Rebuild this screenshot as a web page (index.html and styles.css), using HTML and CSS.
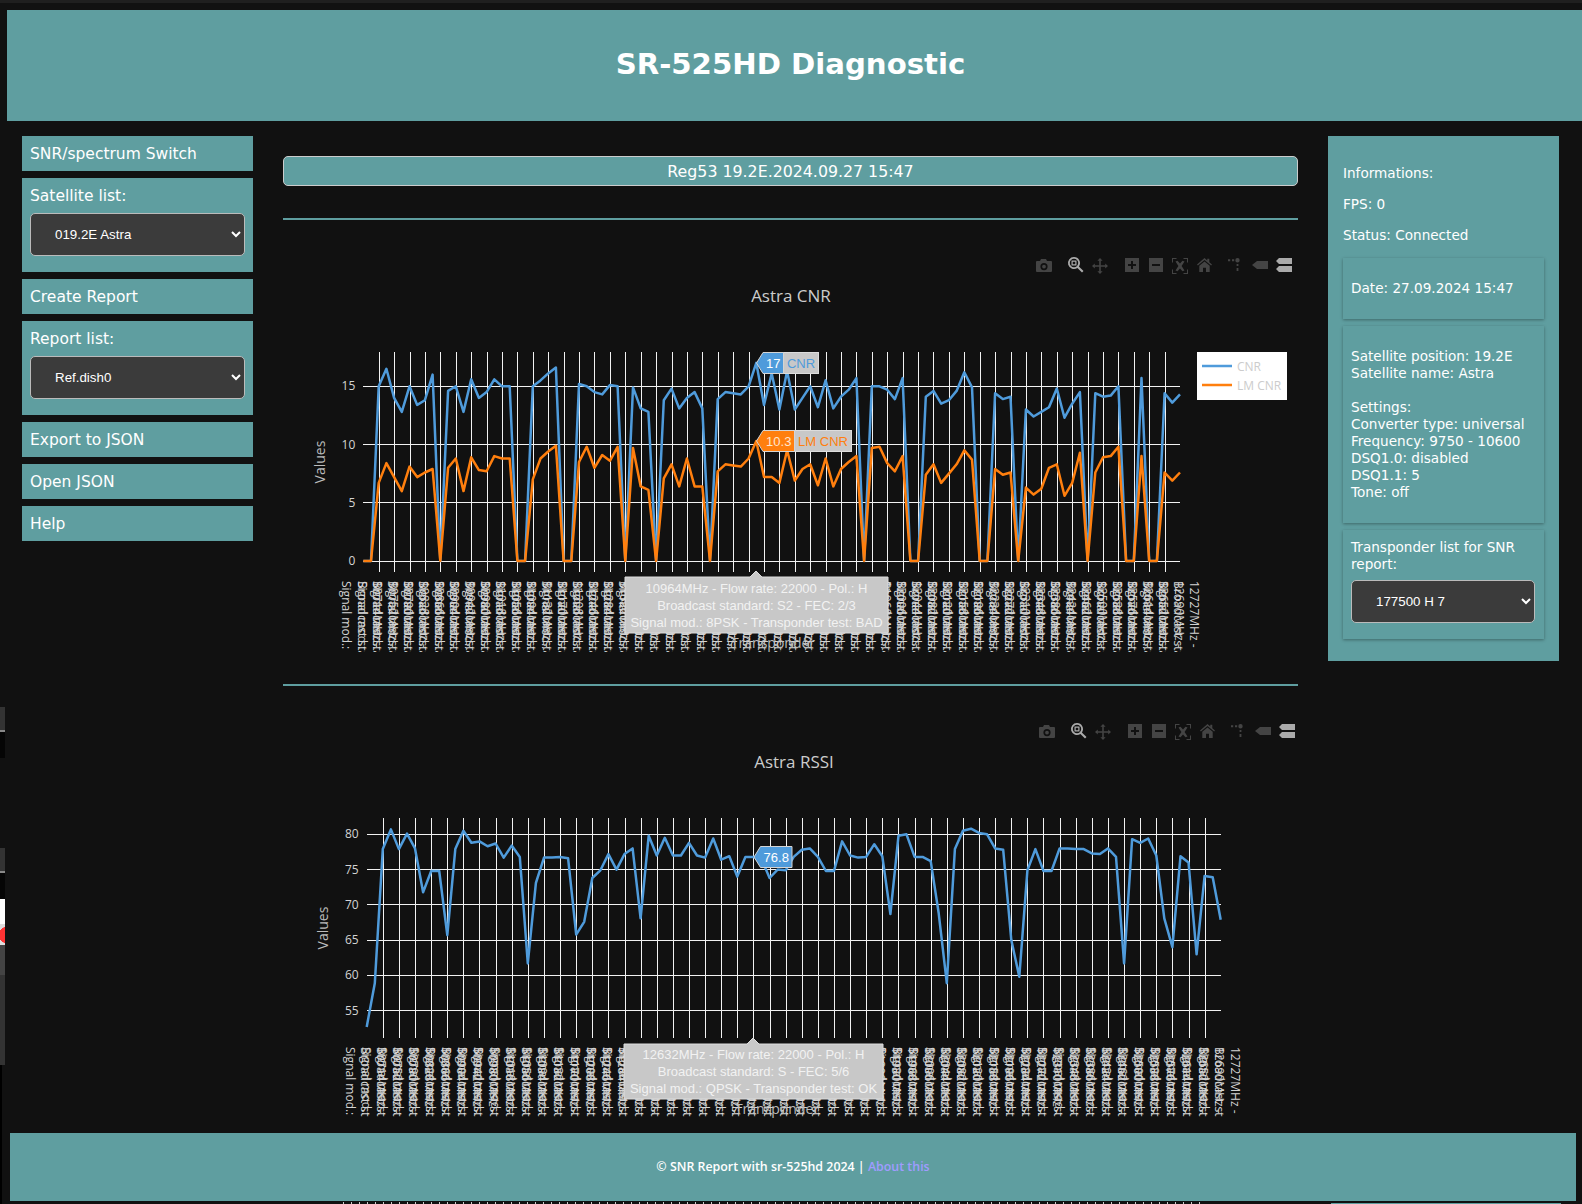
FILE: index.html
```html
<!DOCTYPE html>
<html lang="en">
<head>
<meta charset="utf-8">
<title>SR-525HD Diagnostic</title>
<link rel="stylesheet" href="styles.css">
</head>
<body>
<div class="edge edge-a"></div>
<div class="edge edge-b"></div>
<div class="edge edge-c"></div>
<div class="edge edge-d"></div>
<header class="site-header"><h1>SR-525HD Diagnostic</h1></header>
<div class="layout">
  <aside class="left-col">
    <div class="item">SNR/spectrum Switch</div>
    <div class="item list-item">
      <label>Satellite list:</label>
      <select><option>019.2E Astra</option></select>
    </div>
    <div class="item">Create Report</div>
    <div class="item list-item">
      <label>Report list:</label>
      <select><option>Ref.dish0</option></select>
    </div>
    <div class="item">Export to JSON</div>
    <div class="item">Open JSON</div>
    <div class="item">Help</div>
  </aside>
  <main class="main-col">
    <div class="banner">Reg53 19.2E.2024.09.27 15:47</div>
    <hr class="rule">
    <div class="chart" id="chart-cnr"></div>
    <hr class="rule">
    <div class="chart" id="chart-rssi"></div>
  </main>
  <aside class="right-col">
    <p>Informations:</p>
    <p>FPS: 0</p>
    <p>Status: Connected</p>
    <div class="card card-date">Date: 27.09.2024 15:47</div>
    <div class="card card-sat">Satellite position: 19.2E<br>Satellite name: Astra<br><br>Settings:<br>Converter type: universal<br>Frequency: 9750 - 10600<br>DSQ1.0: disabled<br>DSQ1.1: 5<br>Tone: off</div>
    <div class="card card-tp">
      <label>Transponder list for SNR report:</label>
      <select><option>177500 H 7</option></select>
    </div>
  </aside>
</div>
<footer class="site-footer"><span>© SNR Report with sr-525hd 2024 | <a href="#">About this</a></span></footer>
<div class="under-ticks"></div>
<div class="under-panel"></div>
<script src="charts.js"></script>
</body>
</html>
```
FILE: styles.css
```css
* { box-sizing: border-box; }
html, body { margin: 0; height: 100%; }
body {
  background: #111;
  border-top: 3px solid #1f1f1f;
  color: #fff;
  font-family: "DejaVu Sans", Verdana, sans-serif;
  overflow: hidden;
  position: relative;
}
.site-header {
  margin: 7px 0 0 7px;
  height: 111px;
  padding: 0 8px 3px 0;
  background: cadetblue;
  display: flex;
  align-items: center;
  justify-content: center;
}
.site-header h1 { margin: 0; font-size: 29.2px; font-weight: 700; }
.layout {
  display: flex;
  align-items: flex-start;
  padding: 15px 0 0 22px;
}
.left-col { width: 231px; display: flex; flex-direction: column; gap: 7px; }
.item {
  background: cadetblue;
  height: 35px;
  line-height: 36px;
  padding: 0 8px;
  font-size: 15.5px;
}
.list-item { height: 94px; }
.list-item label { display: block; height: 35px; }
select {
  appearance: auto;
  display: block;
  background: #3b3b3b;
  color: #fff;
  border: 1px solid #bbb;
  border-radius: 5px;
  font-family: "Liberation Sans", Arial, sans-serif;
  font-size: 13.33px;
  padding-left: 20px;
}
.list-item select { width: 215px; height: 43px; }
.main-col { width: 1015px; margin-left: 30px; }
.banner {
  margin-top: 20px;
  height: 30px;
  line-height: 29px;
  background: cadetblue;
  border: 1px solid #ccc;
  border-radius: 5px;
  text-align: center;
  font-size: 15.8px;
}
.rule { border: 0; height: 2px; margin: 32px 0 0; background: cadetblue; }
.chart + .rule { margin-top: 0; }
.chart { height: 464px; }
.chart svg { display: block; overflow: hidden; }
.right-col {
  width: 231px;
  height: 525px;
  margin-left: 30px;
  padding: 0 15px;
  background: cadetblue;
  font-size: 13.6px;
  line-height: 17px;
}
.right-col p { margin: 0; height: 31px; }
.right-col p:first-child { margin-top: 29px; }
.card {
  background: cadetblue;
  padding: 0 8px;
  margin-bottom: 7px;
  box-shadow: 0 1px 3px rgba(0, 0, 0, .35);
}
.card-date { height: 61px; line-height: 61px; }
.card-sat { height: 197px; padding-top: 22px; }
.card-tp { height: 109px; padding-top: 2px; }
.card-tp label { display: block; height: 48px; padding-top: 7px; }
.card-tp select { width: 184px; height: 43px; }
.site-footer {
  position: fixed;
  left: 10px;
  right: 6px;
  bottom: 3px;
  height: 68px;
  padding-bottom: 2px;
  background: cadetblue;
  display: flex;
  align-items: center;
  justify-content: center;
  font-family: "Open Sans", sans-serif;
  font-size: 12.4px;
  font-weight: 600;
}
.site-footer a { color: #a09cff; text-decoration: none; }
.edge { position: absolute; left: 0; }
.edge-a, .edge-b {
  width: 5px;
  height: 51px;
  background: linear-gradient(#333 0 45%, #888 45% 49%, #050505 49%);
}
.edge-a { top: 704px; }
.edge-b { top: 845px; }
.edge-c {
  top: 896px;
  width: 5px;
  height: 166px;
  background:
    radial-gradient(circle at 7px 36px, #f33 0 8px, transparent 8.5px),
    linear-gradient(#fff 0 15%, #ddd 15% 28%, #444 28% 46%, #333 46%);
}
.edge-d { top: 1062px; bottom: 0; width: 2px; background: #000; }
.under-ticks {
  position: fixed; left: 343px; bottom: 0; width: 860px; height: 2px;
  background: repeating-linear-gradient(90deg, #ccc 0 1px, transparent 1px 8px);
}
.under-panel { position: fixed; left: 1331px; bottom: 0; width: 230px; height: 1px; background: cadetblue; }

/* chart contents */
.grid { stroke: #f2f2f2; stroke-width: 1; shape-rendering: crispEdges; }
.trace { fill: none; stroke-width: 2.5; stroke-linejoin: round; }
.trace-blue { stroke: #4f9bdb; }
.trace-orange { stroke: #ff7f0e; }
.tick { font-family: "Open Sans", sans-serif; font-size: 12px; fill: #d4d4d4; }
.axis-title { font-family: "Open Sans", sans-serif; font-size: 14px; fill: #bbb; text-anchor: middle; }
.chart-title { font-family: "Open Sans", sans-serif; font-size: 17px; fill: #ccc; text-anchor: middle; }
.legend-box { fill: #fff; }
.legend-text { font-family: "Open Sans", sans-serif; font-size: 12px; fill: #ccc; }
.hover-box { fill: #c8c8c8; stroke: #ddd; stroke-width: 1; }
.hover-arrow { stroke: #d4d4d4; stroke-width: 1; }
.hover-text { font-family: "Liberation Sans", Arial, sans-serif; font-size: 13px; fill: #f2f2f2; text-anchor: middle; }
.hover-num { font-family: "Liberation Sans", Arial, sans-serif; font-size: 13px; text-anchor: middle; }
.fill-blue { fill: #4f9bdb; }
.fill-orange { fill: #ff7f0e; }
.num-white { fill: #fff; }
.num-cream { fill: #ffe6cf; }
.icon-dim { fill: #444; color: #444; }
.icon-lit { fill: #aaa; color: #aaa; }
```
FILE: charts.js
```js
(function () {
  var NS = 'http://www.w3.org/2000/svg';
  var cnr = [0,0,15,16.5,14,12.8,15,13.4,13.8,16,0,14.6,15,12.8,15.6,14,14.5,15.6,15,15,0,0,15,15.5,16.1,16.6,0,0,15.2,15,14.5,14.3,15.1,15,0,14.9,13.1,12.8,0,13.8,14.8,13.1,14,14.5,13.1,0,13.9,14.5,14.4,14.3,15,17,13.4,16.1,13,16.3,13,14,15,13.2,15.5,13.1,14.1,14.7,15.7,0,15,15,14.7,13.9,15.7,0,0,14.1,14.6,13.5,13.8,14.6,16.2,14.9,0,0,14.4,13.9,14.1,0,13,12.4,12.8,13.2,14.8,12.3,13.5,14.5,0,14.4,14.1,14.2,15,0,0,15.7,0,0,14.4,13.6,14.3];
  var lm = [0,0,6.7,8.4,7.2,6,8.1,7.2,7.6,7.9,0,8,8.8,6,8.9,7.8,7.7,9,8.8,8.8,0,0,7,8.8,9.4,9.9,0,0,8.5,9.8,8,9.1,8.6,9.8,0,9.7,6.4,6.1,0,7.1,8.3,6.4,8.8,6.4,6.4,0,7.7,8.3,8.2,8.1,8.8,10.3,7.2,7.2,6.7,9.5,6.9,7.9,8.3,6.5,8.8,6.4,7.9,8.5,9,0,9.7,9.8,8.4,7.7,9,0,0,7.4,8.3,6.7,7.5,8.3,9.5,8.7,0,0,7.9,7.4,7.6,0,6.3,5.7,6.2,8,8.3,5.6,6.7,9.3,0,7.6,8.9,9,9.8,0,0,9,0,0,7.6,6.9,7.6];
  var rssi = [52.7,58.9,77.9,80.7,77.9,80.1,78,71.8,74.8,74.8,65.7,77.9,80.5,78.8,79,78.3,78.7,76.7,78.4,76.8,61.7,73.1,76.7,76.7,76.8,76.6,65.8,67.6,73.8,74.9,77.2,75,77.2,78,68.1,79.8,77,79.5,77,77,78.8,77,76.7,79.4,76.4,76.9,74,76.8,76.8,76.5,73.8,75,74.9,76.8,77.8,78,76.8,74.8,74.8,79,77,76.7,76.8,78.6,76.9,68.7,79.8,80,76.8,76.8,76.2,68.8,58.9,77.9,80.5,80.8,80.2,80,78,77.8,65,59.8,74.9,77.9,74.8,74.8,78,78,77.9,77.9,77.3,77.2,78,76.8,61.7,79.3,78.8,79.4,77,68.1,64,76.9,76,63,74.1,73.9,67.9];

  function el(parent, name, attrs, text) {
    var n = document.createElementNS(NS, name);
    for (var k in attrs) n.setAttribute(k, attrs[k]);
    if (text !== undefined) n.textContent = text;
    parent.appendChild(n);
    return n;
  }

  var ICONS = [
    ['camera', 753, 'M0 3h4l1-2h5l1 2h4a1 1 0 0 1 1 1v9a1 1 0 0 1-1 1H1a1 1 0 0 1-1-1V4a1 1 0 0 1 1-1zM8 5a3.6 3.6 0 1 0 0 7.2A3.6 3.6 0 0 0 8 5zm0 1.7a1.9 1.9 0 1 1 0 3.8 1.9 1.9 0 0 1 0-3.8z', false],
    ['zoom', 785, 'M6 0a6 6 0 0 1 4.9 9.4l4.6 4.5-1.5 1.6-4.6-4.6A6 6 0 1 1 6 0zm0 1.8a4.2 4.2 0 1 0 0 8.4 4.2 4.2 0 0 0 0-8.4zM3.5 3.5h5v5h-5zM4.7 4.7v2.6h2.6V4.7z', true],
    ['pan', 809, 'M8 0l2.6 2.8H8.8v4.4h4.4V5.4L16 8l-2.8 2.6V8.8H8.8v4.4h1.8L8 16l-2.6-2.8h1.8V8.8H2.8v1.8L0 8l2.8-2.6v1.8h4.4V2.8H5.4z', false],
    ['plus', 842, 'M0 0h14v14H0zM6 3v3H3v2h3v3h2V8h3V6H8V3z', false],
    ['minus', 866, 'M0 0h14v14H0zM3 6v2h8V6z', false],
    ['auto', 889, 'M0 0h4.5v1H1v3.5H0zM11.5 0H16v4.5h-1V1h-3.5zM0 11.5h1V15h3.5v1H0zM15 11.5h1V16h-4.5v-1H15zM3.5 3.5l2-.8L8 5.4l2.5-2.7 2 .8-2.9 4.5 2.9 4.5-2 .8L8 10.6l-2.5 2.7-2-.8 2.9-4.5z', false],
    ['home', 914, 'M7.5 0l2.8 2.5V.8h2v3.5L15 6.6l-.9 1L7.5 2 .9 7.6l-.9-1zM7.5 3.4l5.2 4.4V14H9V9.8H6V14H2.3V7.8z', false],
    ['spike', 945, 'M0 1.2h2.2v2H0zM4 1.2h2.2v2H4zM9.5 0a2.2 2.2 0 1 1 0 4.4 2.2 2.2 0 0 1 0-4.4zM8.6 6h1.8v2H8.6zM8.6 10h1.8v3H8.6z', false],
    ['closest', 969, 'M0 4l5-4h11v8H5z', false],
    ['compare', 993, 'M0 3l3-3h13v6H3zM0 11l3-3h13v6H3z', true]
  ];

  function drawChart(id, c) {
    var svg = el(document.getElementById(id), 'svg', { width: 1015, height: 464, viewBox: '0 0 1015 464' });
    var defs = el(svg, 'defs', {});
    var clip = el(defs, 'clipPath', { id: id + '-clip' });
    el(clip, 'rect', { x: 0, y: 0, width: 1015, height: c.clipY });

    ICONS.forEach(function (ic) {
      el(svg, 'path', {
        d: ic[2],
        transform: 'translate(' + (ic[1] + c.iconDx) + ' ' + (ic[0] === 'closest' ? 41 : ic[0] === 'zoom' ? 37 : 38) + ')',
        'class': ic[3] ? 'icon-lit' : 'icon-dim',
        'fill-rule': 'evenodd'
      });
    });

    el(svg, 'text', { x: c.titleX, y: c.titleY, 'class': 'chart-title' }, c.title);
    el(svg, 'text', { transform: 'translate(' + c.valuesX + ' ' + c.valuesY + ') rotate(-90)', 'class': 'axis-title' }, 'Values');

    function px(i) { return c.x0 + c.dx * i; }
    function py(v) { return c.y0 - (v - c.v0) * c.dy; }

    c.hTicks.forEach(function (v) {
      el(svg, 'line', { x1: c.x0, x2: px(106), y1: py(v), y2: py(v), 'class': 'grid' });
      el(svg, 'text', { x: c.x0 - 8, y: py(v) + 4, 'text-anchor': 'end', 'class': 'tick' }, v);
    });
    for (var i = 2; i <= 104; i += 2) {
      var lx = Math.round(px(i)) + 0.5;
      el(svg, 'line', { x1: lx, x2: lx, y1: c.vTop, y2: c.vBottom, 'class': 'grid' });
    }

    var labels = el(svg, 'g', { 'clip-path': 'url(#' + id + '-clip)' });
    var y = c.labelY;
    for (var j = 0; j <= 106; j += 2) {
      var x = px(j);
      var mhz = j === 106 ? 12727 : 10714 + j * 19;
      var lines = [
        mhz + 'MHz - Flow rate: 22000 - Pol.: H',
        'Broadcast standard: S2 - FEC: 2/3',
        'Signal mod.: 8PSK - Transponder test: OK'
      ];
      lines.forEach(function (t, k) {
        var bx = x + 10 - k * 15.6;
        el(labels, 'text', { transform: 'translate(' + bx + ' ' + y + ') rotate(90)', 'class': 'tick' }, t);
      });
    }
    el(svg, 'text', { x: c.xTitleX, y: c.xTitleY, 'class': 'axis-title' }, 'Transponder');

    c.traces.forEach(function (t) {
      el(svg, 'polyline', {
        points: t.data.map(function (v, n) { return px(n).toFixed(1) + ',' + py(v).toFixed(1); }).join(' '),
        'class': 'trace trace-' + t.color
      });
    });

    /* bottom tooltip */
    var tip = c.tip;
    el(svg, 'path', {
      d: 'M' + tip.x + ' ' + tip.y + 'H' + (tip.ax - 6) + 'l6-6 6 6H' + (tip.x + tip.w) + 'V' + (tip.y + tip.h) + 'H' + tip.x + 'Z',
      'class': 'hover-box'
    });
    tip.lines.forEach(function (t, k) {
      el(svg, 'text', { x: tip.x + tip.w / 2, y: tip.y + tip.dy + k * 17, 'class': 'hover-text' }, t);
    });

    /* hover labels */
    c.hovers.forEach(function (h) {
      var top = h.y - 10.5, bot = h.y + 10.5, bx = h.x + 6.5;
      if (h.name) {
        el(svg, 'rect', { x: bx + h.w, y: top, width: h.nw, height: 21, 'class': 'hover-box' });
      }
      el(svg, 'path', {
        d: 'M' + h.x + ' ' + h.y + 'L' + bx + ' ' + top + 'H' + (bx + h.w) + 'V' + bot + 'H' + bx + 'Z',
        'class': 'hover-arrow fill-' + h.color
      });
      el(svg, 'text', { x: bx + h.w / 2, y: h.y + 4.5, 'class': 'hover-num ' + h.numClass }, h.num);
      if (h.name) {
        el(svg, 'text', { x: bx + h.w + h.nw / 2, y: h.y + 4.5, 'class': 'hover-num fill-' + h.color }, h.name);
      }
    });

    if (c.legend) {
      el(svg, 'rect', { x: 914, y: 132, width: 90, height: 48, 'class': 'legend-box' });
      el(svg, 'line', { x1: 919, x2: 949, y1: 146, y2: 146, 'class': 'trace trace-blue' });
      el(svg, 'text', { x: 954, y: 151, 'class': 'legend-text' }, 'CNR');
      el(svg, 'line', { x1: 919, x2: 949, y1: 165, y2: 165, 'class': 'trace trace-orange' });
      el(svg, 'text', { x: 954, y: 170, 'class': 'legend-text' }, 'LM CNR');
    }
  }

  drawChart('chart-cnr', {
    iconDx: 0, clipY: 432, title: 'Astra CNR', titleX: 508, titleY: 82, valuesX: 42, valuesY: 242,
    x0: 80.3, dx: 7.705, y0: 341, v0: 0, dy: 11.65, hTicks: [0, 5, 10, 15],
    vTop: 132, vBottom: 352, labelY: 361, xTitleX: 490, xTitleY: 428, legend: true,
    traces: [{ data: cnr, color: 'blue' }, { data: lm, color: 'orange' }],
    tip: { x: 342, y: 357, w: 263, h: 56, ax: 473, dy: 16, lines: ['10964MHz - Flow rate: 22000 - Pol.: H', 'Broadcast standard: S2 - FEC: 2/3', 'Signal mod.: 8PSK - Transponder test: BAD'] },
    hovers: [
      { x: 473.5, y: 143, w: 20.5, nw: 35, color: 'blue', num: '17', numClass: 'num-white', name: 'CNR' },
      { x: 473.5, y: 221, w: 31.5, nw: 57, color: 'orange', num: '10.3', numClass: 'num-cream', name: 'LM CNR' }
    ]
  });

  drawChart('chart-rssi', {
    iconDx: 3, clipY: 431, title: 'Astra RSSI', titleX: 511, titleY: 82, valuesX: 45, valuesY: 242,
    x0: 83.7, dx: 8.057, y0: 148.3, v0: 80, dy: 7.056, hTicks: [80, 75, 70, 65, 60, 55],
    vTop: 132, vBottom: 352, labelY: 361, xTitleX: 494, xTitleY: 428, legend: false,
    traces: [{ data: rssi, color: 'blue' }],
    tip: { x: 341, y: 358, w: 259, h: 55, ax: 470, dy: 15, lines: ['12632MHz - Flow rate: 22000 - Pol.: H', 'Broadcast standard: S - FEC: 5/6', 'Signal mod.: QPSK - Transponder test: OK'] },
    hovers: [{ x: 471, y: 171, w: 31.5, color: 'blue', num: '76.8', numClass: 'num-white' }]
  });
})();
```
